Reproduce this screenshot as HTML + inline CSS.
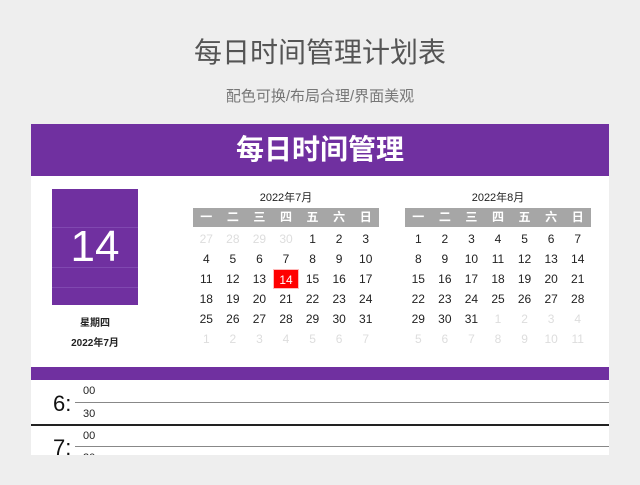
<!DOCTYPE html>
<html><head><meta charset="utf-8"><style>
*{margin:0;padding:0;box-sizing:border-box}
body{width:640px;height:485px;background:#eeeeee;position:relative;overflow:hidden;font-family:"Liberation Sans","Noto Sans CJK SC",sans-serif}
.a{position:absolute}
.t1{left:0;width:640px;top:36px;text-align:center;font-size:28px;color:#555;line-height:34px}
.t2{left:0;width:640px;top:87px;text-align:center;font-size:15px;color:#777;line-height:20px}
.card{left:31px;top:124px;width:578px;height:331px;background:#fff}
.hd{left:31px;top:124px;width:578px;height:52px;background:#7030a0;color:#fff;font-size:28px;font-weight:bold;text-align:center;line-height:52px}
.big{left:52px;top:189px;width:86px;height:116px;background:#7030a0;color:#fff;font-size:44px;text-align:center;line-height:116px}
.big i{position:absolute;left:0;width:86px;height:1px;background:#8048b0}
.sm{left:52px;width:86px;text-align:center;font-size:10px;font-weight:bold;color:#222}
.cal{width:186px}
.cal .m{height:19px;text-align:center;font-size:11px;line-height:19px;color:#222}
.g{display:grid;grid-template-columns:repeat(7,1fr)}
.g div{height:20px;line-height:20px;text-align:center;font-size:12px;color:#222}
.g.h{background:#a6a6a6;height:19px;margin-bottom:2px}
.g.h div{color:#fff;height:19px;line-height:19px;font-weight:bold}
.g .o{color:#ddd}
.g .r{background:#f00;color:#fff;border:1px solid #fbb}
.bar{left:31px;top:367px;width:578px;height:13px;background:#7030a0}
.hr{font-size:22px;color:#111;left:53px}
.mn{font-size:11px;color:#222;left:83px}
.ln{left:75px;width:534px;height:1px;background:#888}
</style></head><body>
<div class="a t1">每日时间管理计划表</div>
<div class="a t2">配色可换/布局合理/界面美观</div>
<div class="a card"></div>
<div class="a hd">每日时间管理</div>
<div class="a big">14<i style="top:38px"></i><i style="top:78px"></i><i style="top:98px"></i></div>
<div class="a sm" style="top:314px">星期四</div>
<div class="a sm" style="top:334px">2022年7月</div>
<div class="a cal" style="left:193px;top:189px">
<div class="m">2022年7月</div>
<div class="g h"><div>一</div><div>二</div><div>三</div><div>四</div><div>五</div><div>六</div><div>日</div></div>
<div class="g">
<div class="o">27</div><div class="o">28</div><div class="o">29</div><div class="o">30</div><div>1</div><div>2</div><div>3</div>
<div>4</div><div>5</div><div>6</div><div>7</div><div>8</div><div>9</div><div>10</div>
<div>11</div><div>12</div><div>13</div><div class="r">14</div><div>15</div><div>16</div><div>17</div>
<div>18</div><div>19</div><div>20</div><div>21</div><div>22</div><div>23</div><div>24</div>
<div>25</div><div>26</div><div>27</div><div>28</div><div>29</div><div>30</div><div>31</div>
<div class="o">1</div><div class="o">2</div><div class="o">3</div><div class="o">4</div><div class="o">5</div><div class="o">6</div><div class="o">7</div>
</div></div>
<div class="a cal" style="left:405px;top:189px">
<div class="m">2022年8月</div>
<div class="g h"><div>一</div><div>二</div><div>三</div><div>四</div><div>五</div><div>六</div><div>日</div></div>
<div class="g">
<div>1</div><div>2</div><div>3</div><div>4</div><div>5</div><div>6</div><div>7</div>
<div>8</div><div>9</div><div>10</div><div>11</div><div>12</div><div>13</div><div>14</div>
<div>15</div><div>16</div><div>17</div><div>18</div><div>19</div><div>20</div><div>21</div>
<div>22</div><div>23</div><div>24</div><div>25</div><div>26</div><div>27</div><div>28</div>
<div>29</div><div>30</div><div>31</div><div class="o">1</div><div class="o">2</div><div class="o">3</div><div class="o">4</div>
<div class="o">5</div><div class="o">6</div><div class="o">7</div><div class="o">8</div><div class="o">9</div><div class="o">10</div><div class="o">11</div>
</div></div>
<div class="a bar"></div>
<div class="a hr" style="top:391px">6:</div>
<div class="a mn" style="top:385px">00</div>
<div class="a ln" style="top:402px"></div>
<div class="a mn" style="top:408px">30</div>
<div class="a" style="left:31px;top:424px;width:578px;height:2px;background:#222"></div>
<div class="a hr" style="top:435px">7:</div>
<div class="a mn" style="top:430px">00</div>
<div class="a ln" style="top:446px"></div>
<div class="a mn" style="top:452px;height:3px;overflow:hidden">30</div>
</body></html>
